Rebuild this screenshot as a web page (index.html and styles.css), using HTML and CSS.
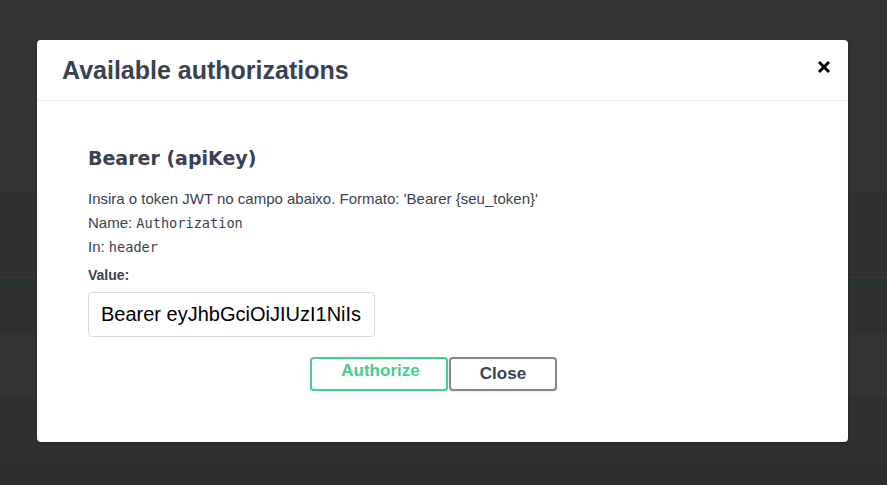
FILE: index.html
```html
<!DOCTYPE html>
<html lang="pt">
<head>
<meta charset="utf-8">
<title>Available authorizations</title>
<link rel="stylesheet" href="styles.css">
</head>
<body>
<div class="page">
  <div class="band band-a"></div>
  <div class="band band-b"></div>
  <div class="band band-line"></div>
  <div class="band band-c"></div>
  <div class="band band-green"></div>
  <div class="band band-op"></div>
  <div class="band band-green"></div>
  <div class="band band-d"></div>
  <div class="band band-e"></div>
  <div class="band band-f"></div>
</div>

<div class="modal">
  <div class="modal-header">
    <h3 class="modal-title">Available authorizations</h3>
    <button class="close-btn" type="button" aria-label="Close">
      <svg width="14" height="14" viewBox="0 0 14 14" aria-hidden="true">
        <path d="M2 2 L12 12 M12 2 L2 12" stroke="#000" stroke-width="3" stroke-linecap="butt" fill="none"/>
      </svg>
    </button>
  </div>
  <div class="modal-body">
    <h4 class="scheme-title">Bearer (apiKey)</h4>
    <p class="line">Insira o token JWT no campo abaixo. Formato: 'Bearer {seu_token}'</p>
    <p class="line">Name: <code class="mono">Authorization</code></p>
    <p class="line">In: <code class="mono">header</code></p>
    <label class="value-label" for="token">Value:</label>
    <input class="value-input" id="token" type="text" value="Bearer eyJhbGciOiJIUzI1NiIs">
    <div class="btn-row">
      <button class="btn btn-authorize" type="button">Authorize</button>
      <button class="btn btn-close" type="button">Close</button>
    </div>
  </div>
</div>
</body>
</html>
```

FILE: styles.css
```css
* { box-sizing: border-box; }

html, body {
  margin: 0;
  padding: 0;
}

body {
  width: 887px;
  height: 485px;
  overflow: hidden;
  background: #333333;
  font-family: "Liberation Sans", Arial, sans-serif;
  position: relative;
}

.page {
  display: flex;
  flex-direction: column;
}

.band { width: 100%; }
.band-a { height: 190px; background: #333333; }
.band-b { height: 87px; background: #313131; }
.band-line { height: 1px; background: #3b3b3b; }
.band-c { height: 6px; background: #303030; }
.band-green { height: 1px; background: #1d3a2c; }
.band-op { height: 48px; background: #2f312f; }
.band-d { height: 63px; background: #333333; }
.band-e { height: 63px; background: #303030; }
.band-f { height: 25px; background: #2d2f2d; }

.modal {
  position: absolute;
  left: 37px;
  top: 40px;
  width: 811px;
  height: 402px;
  background: #fff;
  border-radius: 4px;
  box-shadow: 0 1px 3px rgba(0, 0, 0, 0.3);
}

.modal-header {
  height: 61px;
  display: flex;
  align-items: center;
  padding: 0 17px 4px 25px;
  border-bottom: 1px solid #ebebeb;
}

.modal-title {
  flex: 1;
  margin: 0;
  padding-top: 4px;
  font-size: 25px;
  line-height: 30px;
  font-weight: 700;
  color: #3b4151;
}

.close-btn {
  display: flex;
  align-items: center;
  justify-content: center;
  width: 14px;
  height: 14px;
  padding: 0;
  margin: 0 0 3px 0;
  border: none;
  background: none;
}

.modal-body {
  display: flex;
  flex-direction: column;
  align-items: flex-start;
  padding: 45px 69px 0 51px;
  color: #3b4151;
}

.scheme-title {
  margin: 0;
  font-family: "DejaVu Sans", sans-serif;
  font-size: 19px;
  line-height: 24px;
  font-weight: 700;
  color: #3b4151;
}

.line {
  margin: 0;
  font-size: 15px;
  line-height: 24px;
  color: #3b4151;
}

.scheme-title + .line { margin-top: 17px; }

.mono {
  font-family: "DejaVu Sans Mono", monospace;
  font-size: 13.6px;
}

.value-label {
  margin-top: 6px;
  font-size: 14px;
  line-height: 20px;
  font-weight: 700;
  color: #3b4151;
}

.value-input {
  margin-top: 7px;
  width: 287px;
  height: 45px;
  padding: 0 12px;
  border: 1px solid #d9d9d9;
  border-radius: 4px;
  background: #fff;
  font-family: "Liberation Sans", Arial, sans-serif;
  font-size: 20px;
  color: #000;
  outline: none;
}

.btn-row {
  align-self: stretch;
  display: flex;
  justify-content: center;
  margin-top: 20px;
}

.btn {
  height: 34px;
  border-radius: 4px;
  border: 2px solid #888;
  background: #fff;
  font-family: "Liberation Sans", Arial, sans-serif;
  font-size: 17px;
  font-weight: 700;
  box-shadow: 0 1px 2px rgba(0, 0, 0, 0.1);
  padding: 0;
}

.btn-authorize {
  width: 138px;
  color: #49cc90;
  border-color: #49cc90;
  padding: 0 0 6px 3px;
}

.btn-close {
  width: 108px;
  margin-left: 1px;
  color: #3b4151;
}
```
